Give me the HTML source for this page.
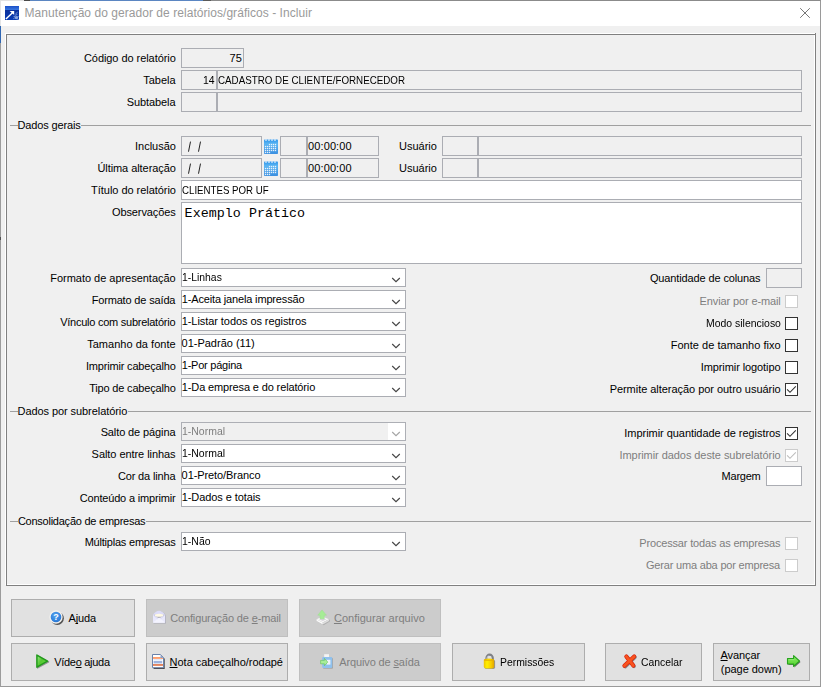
<!DOCTYPE html>
<html>
<head>
<meta charset="utf-8">
<title>Manutenção do gerador de relatórios/gráficos - Incluir</title>
<style>
html,body{margin:0;padding:0;}
body{width:825px;height:689px;overflow:hidden;background:#fff;font-family:"Liberation Sans",sans-serif;font-size:11px;color:#000;position:relative;}
div,span{position:absolute;box-sizing:border-box;white-space:nowrap;}
svg{position:absolute;}
#win{left:1px;top:0;width:820px;height:687px;background:#f0f0f0;border:1px solid #9a9a9a;border-top-color:#8b8b8b;border-left:0;}
#tbar{left:1px;top:1px;width:819px;height:25px;background:#fff;}
#panelw{left:5px;top:33px;width:810px;height:552px;border:1px solid #fff;}
#panel{left:6px;top:34px;width:810px;height:552px;border:1px solid #808080;}
.t{height:14px;line-height:14px;transform-origin:0 0;}
u{text-decoration-skip-ink:none;text-underline-offset:1px;}
.dis{color:#7e7e7e;}
.bd{color:#7e7e7e;}
.tt{color:#9a9a9a;}
.f{border:1px solid #abadb3;height:20px;}
.w{background:#fff;}
.cb{border:1px solid #abadb3;height:19px;background:#fff;width:225px;left:181px;}
.ck{width:13px;height:13px;border:1px solid #333;background:#fff;left:785px;}
.ck.d{border-color:#cccccc;}
.gl{left:10px;width:801px;height:1px;background:#a0a0a0;}
.gb{background:#f0f0f0;height:3px;}
.b{height:38px;border:1px solid #adadad;background:#e1e1e1;}
.b.d{background:#cccccc;border-color:#bfbfbf;}
</style>
</head>
<body>
<div id="win"></div>
<div id="tbar"></div>
<div style="left:0;top:0;width:1px;height:26px;background:#e4e4e4"></div>
<div style="left:0;top:26px;width:1px;height:17px;background:#2f66b3"></div>
<div style="left:0;top:43px;width:1px;height:644px;background:#9c9c9c"></div>
<div style="left:0;top:237px;width:1px;height:3px;background:#505050"></div>
<div style="left:0;top:0;width:24px;height:1px;background:#e2e2e2"></div>
<div style="left:24px;top:0;width:6px;height:1px;background:#4a4a4a"></div>
<div style="left:30px;top:0;width:173px;height:1px;background:#5b86c2"></div>
<div style="left:203px;top:0;width:8px;height:1px;background:#5a5a5a"></div>
<svg style="left:5px;top:6px" width="14" height="14" viewBox="0 0 14 14">
<defs><linearGradient id="ig" x1="0" y1="0" x2="0" y2="1"><stop offset="0" stop-color="#1c50c8"/><stop offset="0.26" stop-color="#3674de"/><stop offset="0.3" stop-color="#0a2f9c"/><stop offset="1" stop-color="#0a3cb4"/></linearGradient></defs>
<rect width="14" height="14" fill="url(#ig)"/>
<path d="M8.3 5.9 L0.9 12.9" stroke="#fff" stroke-width="1.4" fill="none"/>
<path d="M4.6 5 L9.2 5 L9.2 9 Z" fill="#fff"/>
<path d="M10.4 8 L12.6 6.2 M10.2 9.4 L12.4 8.4" stroke="#9db6ea" stroke-width="0.9" fill="none" opacity="0.8"/>
<circle cx="11.4" cy="11.6" r="1.7" fill="#b4c8f0" opacity="0.75"/>
<path d="M8.6 10.6 L10 10.2 M8.4 12.6 L9.6 12.2 M12.6 10 L13.6 11 M12.4 13 L13.8 13.6" stroke="#a6bdec" stroke-width="0.9" fill="none" opacity="0.8"/>
</svg>
<svg style="left:800px;top:8px" width="10" height="10" viewBox="0 0 10 10"><path d="M0.2 0.2 L9.8 9.8 M9.8 0.2 L0.2 9.8" stroke="#777" stroke-width="1" fill="none"/></svg>
<div id="panelw"></div>
<div id="panel"></div>
<div style="left:815px;top:33px;width:1px;height:1px;background:#808080"></div>
<div class="f " style="left:181px;top:48px;width:63px;height:20px"></div>
<div class="f " style="left:181px;top:70px;width:36px;height:20px"></div>
<div class="f " style="left:217px;top:70px;width:585px;height:20px"></div>
<div class="f " style="left:181px;top:92px;width:36px;height:20px"></div>
<div class="f " style="left:217px;top:92px;width:585px;height:20px"></div>
<div class="gl" style="top:125px"></div>
<div class="gb" style="top:124px;left:18px;width:63px"></div>
<div class="f " style="left:181px;top:136px;width:81px;height:20px"></div>
<svg style="left:264px;top:139px" width="14" height="15" viewBox="0 0 14 15">
<defs><linearGradient id="cg139" x1="0" y1="0" x2="0" y2="1"><stop offset="0" stop-color="#2f96ea"/><stop offset="0.3" stop-color="#5cb6f3"/><stop offset="1" stop-color="#3b8fe0"/></linearGradient></defs>
<rect x="0" y="0.6" width="14" height="14.4" rx="0.8" fill="url(#cg139)"/>
<path d="M2 0 v2 M5 0 v2 M8 0 v2 M11 0 v2" stroke="#cfe6fa" stroke-width="1.4"/>
<rect x="4.85" y="4.85" width="1.3" height="1.3" fill="#fff" fill-opacity="0.85"/><rect x="6.85" y="4.85" width="1.3" height="1.3" fill="#fff" fill-opacity="0.85"/><rect x="8.85" y="4.85" width="1.3" height="1.3" fill="#fff" fill-opacity="0.85"/><rect x="10.85" y="4.85" width="1.3" height="1.3" fill="#fff" fill-opacity="0.85"/><rect x="0.85" y="6.85" width="1.3" height="1.3" fill="#fff" fill-opacity="0.85"/><rect x="2.85" y="6.85" width="1.3" height="1.3" fill="#fff" fill-opacity="0.85"/><rect x="4.85" y="6.85" width="1.3" height="1.3" fill="#fff" fill-opacity="0.85"/><rect x="6.85" y="6.85" width="1.3" height="1.3" fill="#fff" fill-opacity="0.85"/><rect x="8.85" y="6.85" width="1.3" height="1.3" fill="#fff" fill-opacity="0.85"/><rect x="10.85" y="6.85" width="1.3" height="1.3" fill="#fff" fill-opacity="0.85"/><rect x="0.85" y="8.85" width="1.3" height="1.3" fill="#fff" fill-opacity="0.85"/><rect x="2.85" y="8.85" width="1.3" height="1.3" fill="#fff" fill-opacity="0.85"/><rect x="4.85" y="8.85" width="1.3" height="1.3" fill="#fff" fill-opacity="0.85"/><rect x="6.85" y="8.85" width="1.3" height="1.3" fill="#fff" fill-opacity="0.85"/><rect x="8.85" y="8.85" width="1.3" height="1.3" fill="#fff" fill-opacity="0.85"/><rect x="10.85" y="8.85" width="1.3" height="1.3" fill="#fff" fill-opacity="0.85"/><rect x="0.85" y="10.85" width="1.3" height="1.3" fill="#fff" fill-opacity="0.85"/><rect x="2.85" y="10.85" width="1.3" height="1.3" fill="#fff" fill-opacity="0.85"/><rect x="4.85" y="10.85" width="1.3" height="1.3" fill="#fff" fill-opacity="0.85"/><rect x="6.85" y="10.85" width="1.3" height="1.3" fill="#fff" fill-opacity="0.85"/><rect x="8.85" y="10.85" width="1.3" height="1.3" fill="#fff" fill-opacity="0.85"/><rect x="10.85" y="10.85" width="1.3" height="1.3" fill="#fff" fill-opacity="0.85"/><rect x="0.85" y="12.85" width="1.3" height="1.3" fill="#fff" fill-opacity="0.85"/><rect x="2.85" y="12.85" width="1.3" height="1.3" fill="#fff" fill-opacity="0.85"/><rect x="4.85" y="12.85" width="1.3" height="1.3" fill="#fff" fill-opacity="0.85"/>
</svg>
<div class="f " style="left:280px;top:136px;width:27px;height:20px"></div>
<div class="f " style="left:307px;top:136px;width:72px;height:20px"></div>
<div class="f " style="left:442px;top:136px;width:36px;height:20px"></div>
<div class="f " style="left:478px;top:136px;width:324px;height:20px"></div>
<svg style="left:186.5px;top:140px" width="5" height="12" viewBox="0 0 5 12"><path d="M3.5 1.6 L1.5 11.7" stroke="#222" stroke-width="1" fill="none"/></svg>
<svg style="left:196.5px;top:140px" width="5" height="12" viewBox="0 0 5 12"><path d="M3.5 1.6 L1.5 11.7" stroke="#222" stroke-width="1" fill="none"/></svg>
<div class="f " style="left:181px;top:158px;width:81px;height:20px"></div>
<svg style="left:264px;top:161px" width="14" height="15" viewBox="0 0 14 15">
<defs><linearGradient id="cg161" x1="0" y1="0" x2="0" y2="1"><stop offset="0" stop-color="#2f96ea"/><stop offset="0.3" stop-color="#5cb6f3"/><stop offset="1" stop-color="#3b8fe0"/></linearGradient></defs>
<rect x="0" y="0.6" width="14" height="14.4" rx="0.8" fill="url(#cg161)"/>
<path d="M2 0 v2 M5 0 v2 M8 0 v2 M11 0 v2" stroke="#cfe6fa" stroke-width="1.4"/>
<rect x="4.85" y="4.85" width="1.3" height="1.3" fill="#fff" fill-opacity="0.85"/><rect x="6.85" y="4.85" width="1.3" height="1.3" fill="#fff" fill-opacity="0.85"/><rect x="8.85" y="4.85" width="1.3" height="1.3" fill="#fff" fill-opacity="0.85"/><rect x="10.85" y="4.85" width="1.3" height="1.3" fill="#fff" fill-opacity="0.85"/><rect x="0.85" y="6.85" width="1.3" height="1.3" fill="#fff" fill-opacity="0.85"/><rect x="2.85" y="6.85" width="1.3" height="1.3" fill="#fff" fill-opacity="0.85"/><rect x="4.85" y="6.85" width="1.3" height="1.3" fill="#fff" fill-opacity="0.85"/><rect x="6.85" y="6.85" width="1.3" height="1.3" fill="#fff" fill-opacity="0.85"/><rect x="8.85" y="6.85" width="1.3" height="1.3" fill="#fff" fill-opacity="0.85"/><rect x="10.85" y="6.85" width="1.3" height="1.3" fill="#fff" fill-opacity="0.85"/><rect x="0.85" y="8.85" width="1.3" height="1.3" fill="#fff" fill-opacity="0.85"/><rect x="2.85" y="8.85" width="1.3" height="1.3" fill="#fff" fill-opacity="0.85"/><rect x="4.85" y="8.85" width="1.3" height="1.3" fill="#fff" fill-opacity="0.85"/><rect x="6.85" y="8.85" width="1.3" height="1.3" fill="#fff" fill-opacity="0.85"/><rect x="8.85" y="8.85" width="1.3" height="1.3" fill="#fff" fill-opacity="0.85"/><rect x="10.85" y="8.85" width="1.3" height="1.3" fill="#fff" fill-opacity="0.85"/><rect x="0.85" y="10.85" width="1.3" height="1.3" fill="#fff" fill-opacity="0.85"/><rect x="2.85" y="10.85" width="1.3" height="1.3" fill="#fff" fill-opacity="0.85"/><rect x="4.85" y="10.85" width="1.3" height="1.3" fill="#fff" fill-opacity="0.85"/><rect x="6.85" y="10.85" width="1.3" height="1.3" fill="#fff" fill-opacity="0.85"/><rect x="8.85" y="10.85" width="1.3" height="1.3" fill="#fff" fill-opacity="0.85"/><rect x="10.85" y="10.85" width="1.3" height="1.3" fill="#fff" fill-opacity="0.85"/><rect x="0.85" y="12.85" width="1.3" height="1.3" fill="#fff" fill-opacity="0.85"/><rect x="2.85" y="12.85" width="1.3" height="1.3" fill="#fff" fill-opacity="0.85"/><rect x="4.85" y="12.85" width="1.3" height="1.3" fill="#fff" fill-opacity="0.85"/>
</svg>
<div class="f " style="left:280px;top:158px;width:27px;height:20px"></div>
<div class="f " style="left:307px;top:158px;width:72px;height:20px"></div>
<div class="f " style="left:442px;top:158px;width:36px;height:20px"></div>
<div class="f " style="left:478px;top:158px;width:324px;height:20px"></div>
<svg style="left:186.5px;top:162px" width="5" height="12" viewBox="0 0 5 12"><path d="M3.5 1.6 L1.5 11.7" stroke="#222" stroke-width="1" fill="none"/></svg>
<svg style="left:196.5px;top:162px" width="5" height="12" viewBox="0 0 5 12"><path d="M3.5 1.6 L1.5 11.7" stroke="#222" stroke-width="1" fill="none"/></svg>
<div class="f w" style="left:181px;top:180px;width:621px;height:20px"></div>
<div class="f w" style="left:181px;top:202px;width:621px;height:62px"></div>
<div class="cb" style="top:268px"></div>
<svg style="left:391px;top:277px" width="10" height="6" viewBox="0 0 10 6"><path d="M1.2 1 L5 4.6 L8.8 1" fill="none" stroke="#454545" stroke-width="1.15"/></svg>
<div class="cb" style="top:290px"></div>
<svg style="left:391px;top:299px" width="10" height="6" viewBox="0 0 10 6"><path d="M1.2 1 L5 4.6 L8.8 1" fill="none" stroke="#454545" stroke-width="1.15"/></svg>
<div class="cb" style="top:312px"></div>
<svg style="left:391px;top:321px" width="10" height="6" viewBox="0 0 10 6"><path d="M1.2 1 L5 4.6 L8.8 1" fill="none" stroke="#454545" stroke-width="1.15"/></svg>
<div class="cb" style="top:334px"></div>
<svg style="left:391px;top:343px" width="10" height="6" viewBox="0 0 10 6"><path d="M1.2 1 L5 4.6 L8.8 1" fill="none" stroke="#454545" stroke-width="1.15"/></svg>
<div class="cb" style="top:356px"></div>
<svg style="left:391px;top:365px" width="10" height="6" viewBox="0 0 10 6"><path d="M1.2 1 L5 4.6 L8.8 1" fill="none" stroke="#454545" stroke-width="1.15"/></svg>
<div class="cb" style="top:378px"></div>
<svg style="left:391px;top:387px" width="10" height="6" viewBox="0 0 10 6"><path d="M1.2 1 L5 4.6 L8.8 1" fill="none" stroke="#454545" stroke-width="1.15"/></svg>
<div class="f " style="left:766px;top:268px;width:36px;height:20px"></div>
<div class="ck d" style="top:295px"></div>
<div class="ck" style="top:317px"></div>
<div class="ck" style="top:339px"></div>
<div class="ck" style="top:361px"></div>
<div class="ck" style="top:383px"><svg style="left:0;top:0" width="11" height="11" viewBox="0 0 11 11"><path d="M1.1 5.3 L4.0 8.3 L9.8 2.4" fill="none" stroke="#333" stroke-width="1.1"/></svg></div>
<div class="gl" style="top:411px"></div>
<div class="gb" style="top:410px;left:18px;width:109.5px"></div>
<div class="cb" style="top:422px;background:#f0f0f0;border-color:#adafb5"><div style="right:0;top:0;width:17px;height:17px;background:#fff"></div></div>
<svg style="left:391px;top:431px" width="10" height="6" viewBox="0 0 10 6"><path d="M1.2 1 L5 4.6 L8.8 1" fill="none" stroke="#a5a5a5" stroke-width="1.15"/></svg>
<div class="cb" style="top:444px"></div>
<svg style="left:391px;top:453px" width="10" height="6" viewBox="0 0 10 6"><path d="M1.2 1 L5 4.6 L8.8 1" fill="none" stroke="#454545" stroke-width="1.15"/></svg>
<div class="cb" style="top:466px"></div>
<svg style="left:391px;top:475px" width="10" height="6" viewBox="0 0 10 6"><path d="M1.2 1 L5 4.6 L8.8 1" fill="none" stroke="#454545" stroke-width="1.15"/></svg>
<div class="cb" style="top:488px"></div>
<svg style="left:391px;top:497px" width="10" height="6" viewBox="0 0 10 6"><path d="M1.2 1 L5 4.6 L8.8 1" fill="none" stroke="#454545" stroke-width="1.15"/></svg>
<div class="ck" style="top:427px"><svg style="left:0;top:0" width="11" height="11" viewBox="0 0 11 11"><path d="M1.1 5.3 L4.0 8.3 L9.8 2.4" fill="none" stroke="#333" stroke-width="1.1"/></svg></div>
<div class="ck d" style="top:449px"><svg style="left:0;top:0" width="11" height="11" viewBox="0 0 11 11"><path d="M1.1 5.3 L4.0 8.3 L9.8 2.4" fill="none" stroke="#bdbdbd" stroke-width="1.1"/></svg></div>
<div class="f w" style="left:766px;top:466px;width:36px;height:20px"></div>
<div class="gl" style="top:521px"></div>
<div class="gb" style="top:520px;left:18px;width:128px"></div>
<div class="cb" style="top:532px"></div>
<svg style="left:391px;top:541px" width="10" height="6" viewBox="0 0 10 6"><path d="M1.2 1 L5 4.6 L8.8 1" fill="none" stroke="#454545" stroke-width="1.15"/></svg>
<div class="ck d" style="top:537px"></div>
<div class="ck d" style="top:559px"></div>
<div class="b" style="left:11px;top:599px;width:124px"></div>
<div class="b d" style="left:146px;top:599px;width:142px"></div>
<div class="b d" style="left:299px;top:599px;width:142px"></div>
<div class="b" style="left:11px;top:643px;width:124px"></div>
<div class="b" style="left:146px;top:643px;width:142px"></div>
<div class="b d" style="left:299px;top:643px;width:142px"></div>
<div class="b" style="left:452px;top:643px;width:133px"></div>
<div class="b" style="left:605px;top:643px;width:97px"></div>
<div class="b" style="left:713px;top:643px;width:97px"></div>
<div class="t " style="left:83.95px;font-size:11px;letter-spacing:-0.061px;top:51px">Código do relatório</div>
<div class="t " style="left:143.34px;font-size:11px;letter-spacing:-0.041px;top:73px">Tabela</div>
<div class="t " style="left:126.78px;font-size:11px;letter-spacing:-0.100px;top:95px">Subtabela</div>
<div class="t " style="left:135.01px;font-size:11px;letter-spacing:-0.016px;top:139px">Inclusão</div>
<div class="t " style="left:97.41px;font-size:11px;letter-spacing:-0.067px;top:161px">Última alteração</div>
<div class="t " style="left:91.12px;font-size:11px;letter-spacing:-0.040px;top:183px">Título do relatório</div>
<div class="t " style="left:111.95px;font-size:11px;letter-spacing:-0.099px;top:205px">Observações</div>
<div class="t " style="left:50.32px;font-size:11px;letter-spacing:-0.028px;top:271px">Formato de apresentação</div>
<div class="t " style="left:91.63px;font-size:11px;letter-spacing:-0.158px;top:293px">Formato de saída</div>
<div class="t " style="left:60.20px;font-size:11px;letter-spacing:-0.249px;top:315px">Vínculo com subrelatório</div>
<div class="t " style="left:87.15px;font-size:11px;letter-spacing:0.030px;top:337px">Tamanho da fonte</div>
<div class="t " style="left:85.94px;font-size:11px;letter-spacing:-0.178px;top:359px">Imprimir cabeçalho</div>
<div class="t " style="left:89.24px;font-size:11px;letter-spacing:-0.183px;top:381px">Tipo de cabeçalho</div>
<div class="t " style="left:100.64px;font-size:11px;letter-spacing:-0.108px;top:425px">Salto de página</div>
<div class="t " style="left:91.62px;font-size:11px;letter-spacing:-0.058px;top:447px">Salto entre linhas</div>
<div class="t " style="left:117.94px;font-size:11px;letter-spacing:-0.154px;top:469px">Cor da linha</div>
<div class="t " style="left:79.76px;font-size:11px;letter-spacing:-0.178px;top:491px">Conteúdo a imprimir</div>
<div class="t " style="left:84.65px;font-size:11px;letter-spacing:-0.213px;top:535px">Múltiplas empresas</div>
<div class="t " style="left:17.59px;font-size:11px;letter-spacing:-0.155px;top:118px">Dados gerais</div>
<div class="t " style="left:17.52px;font-size:11px;letter-spacing:-0.072px;top:404px">Dados por subrelatório</div>
<div class="t " style="left:17.88px;font-size:11px;letter-spacing:-0.242px;top:514px">Consolidação de empresas</div>
<div class="t " style="left:229.40px;font-size:11px;letter-spacing:0.135px;top:51px">75</div>
<div class="t " style="left:202.75px;font-size:11px;transform:scaleX(0.9478);top:73px">14</div>
<div class="t " style="left:217.77px;font-size:11px;transform:scaleX(0.8894);top:73px">CADASTRO DE CLIENTE/FORNECEDOR</div>
<div class="t " style="left:308.11px;font-size:11px;letter-spacing:0.096px;top:139px">00:00:00</div>
<div class="t " style="left:308.11px;font-size:11px;letter-spacing:0.096px;top:161px">00:00:00</div>
<div class="t " style="left:399.04px;font-size:11px;letter-spacing:-0.010px;top:139px">Usuário</div>
<div class="t " style="left:399.04px;font-size:11px;letter-spacing:-0.010px;top:161px">Usuário</div>
<div class="t " style="left:181.80px;font-size:11px;transform:scaleX(0.8811);top:183px">CLIENTES POR UF</div>
<div class="t " style="left:184.60px;font-size:13.33px;font-family:'Liberation Mono',monospace;letter-spacing:0.039px;top:207.3px">Exemplo Prático</div>
<div class="t " style="left:181.53px;font-size:11px;transform:scaleX(0.9437);top:270px">1-Linhas</div>
<div class="t " style="left:181.87px;font-size:11px;letter-spacing:-0.161px;top:292px">1-Aceita janela impressão</div>
<div class="t " style="left:181.73px;font-size:11px;letter-spacing:-0.068px;top:314px">1-Listar todos os registros</div>
<div class="t " style="left:181.53px;font-size:11px;letter-spacing:0.000px;top:336px">01-Padrão (11)</div>
<div class="t " style="left:181.81px;font-size:11px;letter-spacing:-0.236px;top:358px">1-Por página</div>
<div class="t " style="left:181.84px;font-size:11px;letter-spacing:-0.135px;top:380px">1-Da empresa e do relatório</div>
<div class="t dis" style="left:181.73px;font-size:11px;transform:scaleX(0.9518);top:424px">1-Normal</div>
<div class="t " style="left:181.73px;font-size:11px;transform:scaleX(0.9518);top:446px">1-Normal</div>
<div class="t " style="left:181.61px;font-size:11px;letter-spacing:-0.085px;top:468px">01-Preto/Branco</div>
<div class="t " style="left:181.73px;font-size:11px;letter-spacing:-0.085px;top:490px">1-Dados e totais</div>
<div class="t " style="left:181.73px;font-size:11px;transform:scaleX(0.9522);top:534px">1-Não</div>
<div class="t " style="left:649.94px;font-size:11px;letter-spacing:-0.126px;top:271px">Quantidade de colunas</div>
<div class="t dis" style="left:699.59px;font-size:11px;letter-spacing:-0.124px;top:294px">Enviar por e-mail</div>
<div class="t " style="left:705.50px;font-size:11px;transform:scaleX(0.9499);top:316px">Modo silencioso</div>
<div class="t " style="left:670.63px;font-size:11px;letter-spacing:0.032px;top:338px">Fonte de tamanho fixo</div>
<div class="t " style="left:700.74px;font-size:11px;letter-spacing:-0.093px;top:360px">Imprimir logotipo</div>
<div class="t " style="left:609.63px;font-size:11px;letter-spacing:-0.040px;top:382px">Permite alteração por outro usuário</div>
<div class="t " style="left:624.34px;font-size:11px;letter-spacing:-0.047px;top:426px">Imprimir quantidade de registros</div>
<div class="t dis" style="left:619.51px;font-size:11px;letter-spacing:-0.065px;top:448px">Imprimir dados deste subrelatório</div>
<div class="t " style="left:721.62px;font-size:11px;letter-spacing:-0.246px;top:469px">Margem</div>
<div class="t dis" style="left:639.25px;font-size:11px;letter-spacing:-0.162px;top:536px">Processar todas as empresas</div>
<div class="t dis" style="left:646.01px;font-size:11px;letter-spacing:-0.190px;top:558px">Gerar uma aba por empresa</div>
<div class="t tt" style="left:24.58px;font-size:12px;letter-spacing:0.047px;top:6px">Manutenção do gerador de relatórios/gráficos - Incluir</div>
<div class="t " style="left:68.60px;font-size:11px;letter-spacing:-0.157px;top:611px">A<u style="padding:0 1px;margin:0 -1px">j</u>uda</div>
<div class="t bd" style="left:170.18px;font-size:11px;letter-spacing:-0.139px;top:611px">Configuração de <u>e</u>-mail</div>
<div class="t bd" style="left:333.95px;font-size:11px;letter-spacing:0.021px;top:611px"><u>C</u>onfigurar arquivo</div>
<div class="t " style="left:54.23px;font-size:11px;letter-spacing:-0.293px;top:655px">Víde<u>o</u> ajuda</div>
<div class="t " style="left:169.58px;font-size:11px;letter-spacing:-0.020px;top:655px"><u>N</u>ota cabeçalho/rodapé</div>
<div class="t bd" style="left:339.37px;font-size:11px;letter-spacing:-0.141px;top:655px">Arquivo de <u>s</u>aída</div>
<div class="t " style="left:500.10px;font-size:11px;transform:scaleX(0.9447);top:655px">Permissões</div>
<div class="t " style="left:641.49px;font-size:11px;transform:scaleX(0.9429);top:655px">Cancelar</div>
<div class="t " style="left:720.55px;font-size:11px;letter-spacing:-0.109px;top:648px"><u>A</u>vançar</div>
<div class="t " style="left:720.79px;font-size:11px;letter-spacing:-0.032px;top:662px">(page down)</div>
<svg width="0" height="0" style="left:0;top:0"><defs>
<filter id="bl" x="-30%" y="-30%" width="160%" height="160%"><feGaussianBlur stdDeviation="0.55"/></filter>
<radialGradient id="hg" cx="0.45" cy="0.35" r="0.75"><stop offset="0" stop-color="#58a4ee"/><stop offset="0.7" stop-color="#2f80dc"/><stop offset="1" stop-color="#2a6cc4"/></radialGradient>
<linearGradient id="pg" x1="0" y1="0" x2="1" y2="0.6"><stop offset="0" stop-color="#9be887"/><stop offset="0.5" stop-color="#55c832"/><stop offset="1" stop-color="#62d63c"/></linearGradient>
<linearGradient id="lg" x1="0" y1="0" x2="1" y2="0"><stop offset="0" stop-color="#f0c400"/><stop offset="0.3" stop-color="#fff000"/><stop offset="0.7" stop-color="#f8cc00"/><stop offset="1" stop-color="#e0a400"/></linearGradient>
<linearGradient id="ag" x1="0" y1="0" x2="0" y2="1"><stop offset="0" stop-color="#8df06a"/><stop offset="1" stop-color="#4fcf2a"/></linearGradient>
</defs></svg>
<!-- help -->
<svg style="left:47px;top:608px" width="20" height="20" viewBox="0 0 20 20">
<circle cx="10.3" cy="10.3" r="6.6" fill="#333" opacity="0.8" filter="url(#bl)"/>
<circle cx="9" cy="9" r="6.7" fill="#f3f1ee"/>
<circle cx="9" cy="9" r="5.3" fill="url(#hg)"/>
<text x="9" y="12.2" font-family="Liberation Sans" font-weight="bold" font-size="9" fill="#fff" text-anchor="middle">?</text>
</svg>
<!-- play -->
<svg style="left:33px;top:651px" width="20" height="20" viewBox="0 0 20 20">
<path d="M4.6 4.9 L15.6 10.9 L4.6 17.1 Z" fill="#555" opacity="0.55" stroke="#555" stroke-width="1.2" stroke-linejoin="round" filter="url(#bl)"/>
<path d="M3.9 4.1 L14.5 10.1 L3.9 16.2 Z" fill="url(#pg)" stroke="#229a1c" stroke-width="1.5" stroke-linejoin="round"/>
</svg>
<!-- envelope (disabled) -->
<svg style="left:150px;top:608px" width="20" height="20" viewBox="0 0 20 20">
<path d="M3.6 7.2 Q9.6 -0.6 16 7.2 V15.6 H3.6 Z" fill="#8f8fa3" opacity="0.55" filter="url(#bl)"/>
<path d="M3 6.8 Q9 -1.2 15.2 6.8 Z" fill="#dcdcf8"/>
<ellipse cx="9.1" cy="7.2" rx="4.3" ry="1.5" fill="#fffae4"/>
<path d="M3 6.6 L9.1 10.6 L15.2 6.6 V14.8 H3 Z" fill="#e9e9fc"/>
<path d="M3 14.8 L9.1 9.6 L15.2 14.8 Z" fill="#f4f4ff"/>
<path d="M3.2 6.9 L7.6 10.8 M15 6.9 L10.6 10.8" stroke="#cfcfee" stroke-width="0.7" fill="none"/>
</svg>
<!-- note -->
<svg style="left:150px;top:652px" width="20" height="20" viewBox="0 0 20 20">
<path d="M3.6 3.6 H11.4 L14.7 6.8 V16.9 H3.6 Z" fill="#2a2a2a" opacity="0.85" filter="url(#bl)"/>
<path d="M2.5 2.5 H10.3 L13.5 5.7 V15.7 H2.5 Z" fill="#fff" stroke="#6a82aa" stroke-width="1"/>
<path d="M10.1 2.6 V5.9 H13.4 Z" fill="#8a9fc6"/>
<rect x="9.7" y="3.4" width="1.2" height="1.2" fill="#eef2fa"/>
<rect x="3" y="5" width="7.2" height="1.9" fill="#ff9e6c"/>
<rect x="10.2" y="6" width="2.8" height="0.9" fill="#ff9e6c"/>
<rect x="3.6" y="7.6" width="8.6" height="0.6" fill="#b4c6ea"/>
<rect x="3.6" y="9" width="8.6" height="2.4" fill="#9fb3de"/>
<rect x="3" y="12" width="10" height="1.9" fill="#e2835e"/>
</svg>
<!-- configurar arquivo (disabled) -->
<svg style="left:314px;top:608px" width="20" height="20" viewBox="0 0 20 20">
<path d="M3.4 12 L9 9 L15.8 12 V13.4 L9.6 17.2 L3.4 13.4 Z" fill="#888" opacity="0.45" filter="url(#bl)"/>
<path d="M2.6 11.2 L8.4 8.4 L15 11.2 L8.8 14.6 Z" fill="#f6f6f6"/>
<path d="M2.6 11.2 L8.8 14.6 V16.6 L2.6 13 Z" fill="#fafafa"/>
<path d="M15 11.2 L8.8 14.6 V16.6 L15 13 Z" fill="#dedede"/>
<path d="M5 11.2 L8.4 9.7 L12.4 11.2 L8.8 13 Z" fill="#d8d4dc"/>
<path d="M8 1.9 L12.4 7.2 L10.2 7.2 L10.2 10.8 L6 10.8 L6 7.2 L3.8 7.2 Z" fill="#a6ec96" stroke="#9be08a" stroke-width="0.5" stroke-linejoin="round"/>
</svg>
<!-- arquivo de saida (disabled) -->
<svg style="left:317px;top:652px" width="20" height="20" viewBox="0 0 20 20">
<rect x="6" y="5.8" width="10" height="11" rx="1" fill="#777" opacity="0.45" filter="url(#bl)"/>
<path d="M7.2 2.2 H12 V6 H7.2 Z" fill="#f4f4f4"/>
<rect x="5.2" y="5" width="10" height="11" rx="1.2" fill="#8fc1ee"/>
<rect x="9.4" y="7.8" width="4" height="4.8" fill="#eef2f8"/>
<path d="M3.6 8.4 H7.4 V6.4 L10.8 10.1 L7.4 13.8 V11.8 H3.6 Z" fill="#a8ee98" stroke="#63c552" stroke-width="0.6" stroke-linejoin="round"/>
</svg>
<!-- lock -->
<svg style="left:481px;top:651px" width="20" height="20" viewBox="0 0 20 20">
<rect x="3.5" y="8.8" width="10.6" height="9.2" rx="1.8" fill="#444" opacity="0.5" filter="url(#bl)"/>
<path d="M5.4 10 V7 a3.2 3.4 0 0 1 6.4 0 V10" fill="none" stroke="#7f8186" stroke-width="2.1"/>
<path d="M6 10 V7.2 a2.5 2.6 0 0 1 1.6 -2.4" fill="none" stroke="#d8dadd" stroke-width="0.8"/>
<rect x="2.8" y="8" width="10.4" height="9.4" rx="1.8" fill="url(#lg)"/>
<rect x="2.8" y="8" width="10.4" height="2" rx="1" fill="#e4ac00" opacity="0.75"/>
<rect x="5.6" y="7.6" width="4.8" height="1.4" fill="#f4d000"/>
</svg>
<!-- cancel X -->
<svg style="left:619px;top:651px" width="20" height="20" viewBox="0 0 20 20">
<path d="M8.1 6.2 L15.1 15.4 M16 6.2 L6.2 15.6" stroke="#333" stroke-width="3.6" stroke-linecap="round" opacity="0.5" filter="url(#bl)" fill="none"/>
<path d="M7.3 5.5 L14.3 14.6 M15.2 5.5 L5.4 14.8" stroke="#d9260f" stroke-width="4.1" stroke-linecap="round" fill="none"/>
<path d="M7.3 5.5 L14.3 14.6 M15.2 5.5 L5.4 14.8" stroke="#f9541f" stroke-width="2.7" stroke-linecap="round" fill="none"/>
</svg>
<!-- green arrow -->
<svg style="left:784px;top:651px" width="20" height="20" viewBox="0 0 20 20">
<path d="M4.4 8.6 H10.4 V5.4 L16.6 10.9 L10.4 16.4 V14 H4.4 Z" fill="#222" opacity="0.6" filter="url(#bl)"/>
<path d="M3.5 7.6 H9.6 V4.6 L15.5 10 L9.6 15.4 V13 H3.5 Z" fill="url(#ag)" stroke="#27a31d" stroke-width="1.1" stroke-linejoin="round"/>
<path d="M4.4 8.6 H10.2" stroke="#b4f59c" stroke-width="0.8" opacity="0.7"/>
</svg>

</body>
</html>
